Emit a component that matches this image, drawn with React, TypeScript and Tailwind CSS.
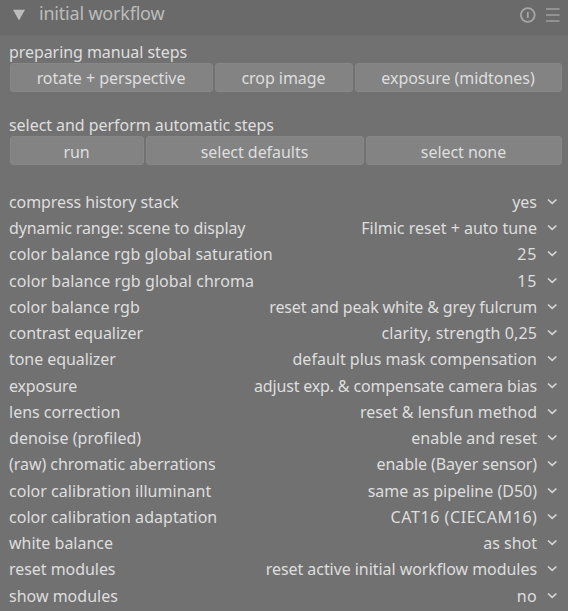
const rows: [string, string, string, string][] = [
  ['compress history stack', 'tracking-[-0.09px]', 'yes', ''],
  ['dynamic range: scene to display', 'tracking-[-0.12px]', 'Filmic reset + auto tune', ''],
  ['color balance rgb global saturation', 'tracking-[0.03px]', '25', 'tracking-[0.7px]'],
  ['color balance rgb global chroma', 'tracking-[0.06px]', '15', 'tracking-[0.7px]'],
  ['color balance rgb', '', 'reset and peak white & grey fulcrum', 'tracking-[-0.14px]'],
  ['contrast equalizer', 'tracking-[-0.06px]', 'clarity, strength 0,25', 'tracking-[0.1px]'],
  ['tone equalizer', 'tracking-[-0.07px]', 'default plus mask compensation', ''],
  ['exposure', 'tracking-[-0.2px]', 'adjust exp. & compensate camera bias', 'tracking-[-0.17px]'],
  ['lens correction', '', 'reset & lensfun method', ''],
  ['denoise (profiled)', 'tracking-[0.04px]', 'enable and reset', ''],
  ['(raw) chromatic aberrations', 'tracking-[-0.04px]', 'enable (Bayer sensor)', 'tracking-[-0.1px]'],
  ['color calibration illuminant', 'tracking-[0.03px]', 'same as pipeline (D50)', ''],
  ['color calibration adaptation', 'tracking-[0.03px]', 'CAT16 (CIECAM16)', 'tracking-[0.57px] -mr-[0.5px]'],
  ['white balance', '', 'as shot', ''],
  ['reset modules', 'tracking-[-0.05px]', 'reset active initial workflow modules', 'tracking-[-0.06px]'],
  ['show modules', '', 'no', 'tracking-[0.3px]'],
];

function ActionButton({ label, width }: { label: string; width: string }) {
  return (
    <button className={`${width} h-[29px] shrink-0 rounded-[3px] border border-[#878787] bg-[#838383] pt-px pr-px leading-none tracking-[-0.05px]`}>
      {label}
    </button>
  );
}

function Chevron() {
  return (
    <svg className="ml-[10px] h-[8px] w-[11px]" viewBox="0 0 11 8" fill="none" stroke="#d6d6d6" strokeWidth="1.7">
      <path d="M1 1.5 5.2 5.4 9.4 1.5" />
    </svg>
  );
}

export default function App() {
  return (
    <div className="h-[611px] w-[568px] overflow-hidden whitespace-nowrap bg-[#717171] font-['Noto_Sans',sans-serif] text-[16px] text-[#dedede]">
      <header className="flex h-[35px] items-center bg-[#6a6a6a] pr-[8px] pb-[6px] pl-[13px]">
        <svg className="h-[12px] w-[12px]" viewBox="0 0 12 12" fill="#bcbcbc">
          <path d="M0 .7H12L6 11.5Z" />
        </svg>
        <h1 className="-mt-[3px] ml-[14px] flex-1 text-[18px] leading-none tracking-[-0.2px] text-[#bcbcbc]">initial workflow</h1>
        <svg className="h-[16px] w-[16px]" viewBox="0 0 16 16" fill="none" stroke="#a6a6a6" strokeWidth="1.8">
          <circle cx="7.8" cy="8" r="6.9" />
          <path d="M7.8 5V11" />
        </svg>
        <svg className="ml-[10px] h-[16px] w-[14px]" viewBox="0 0 14 16" stroke="#a0a0a0" strokeWidth="1.3">
          <path d="M0 2H13.5M0 8H13.5M0 14H13.5" />
        </svg>
      </header>
      <section className="px-[10px] pt-[6px]">
        <p className="-ml-px h-[22px] leading-[22px] tracking-[-0.07px]">preparing manual steps</p>
        <div className="flex gap-[2px]">
          <ActionButton label="rotate + perspective" width="w-[203px]" />
          <ActionButton label="crop image" width="w-[138px]" />
          <ActionButton label="exposure (midtones)" width="w-[207px]" />
        </div>
      </section>
      <section className="px-[10px] pt-[22px]">
        <p className="-ml-px h-[22px] leading-[22px] tracking-[-0.05px]">select and perform automatic steps</p>
        <div className="flex gap-[2px] *:pt-[3px]">
          <ActionButton label="run" width="w-[134px]" />
          <ActionButton label="select defaults" width="w-[218px]" />
          <ActionButton label="select none" width="w-[196px]" />
        </div>
      </section>
      <section className="pt-[23.7px] pr-[10px] pl-[9px]">
        {rows.map(([label, labelFit, value, valueFit]) => (
          <div key={label} className="flex h-[26.25px] items-center">
            <span className={`flex-1 ${labelFit}`}>{label}</span>
            <span className={valueFit}>{value}</span>
            <Chevron />
          </div>
        ))}
      </section>
    </div>
  );
}
